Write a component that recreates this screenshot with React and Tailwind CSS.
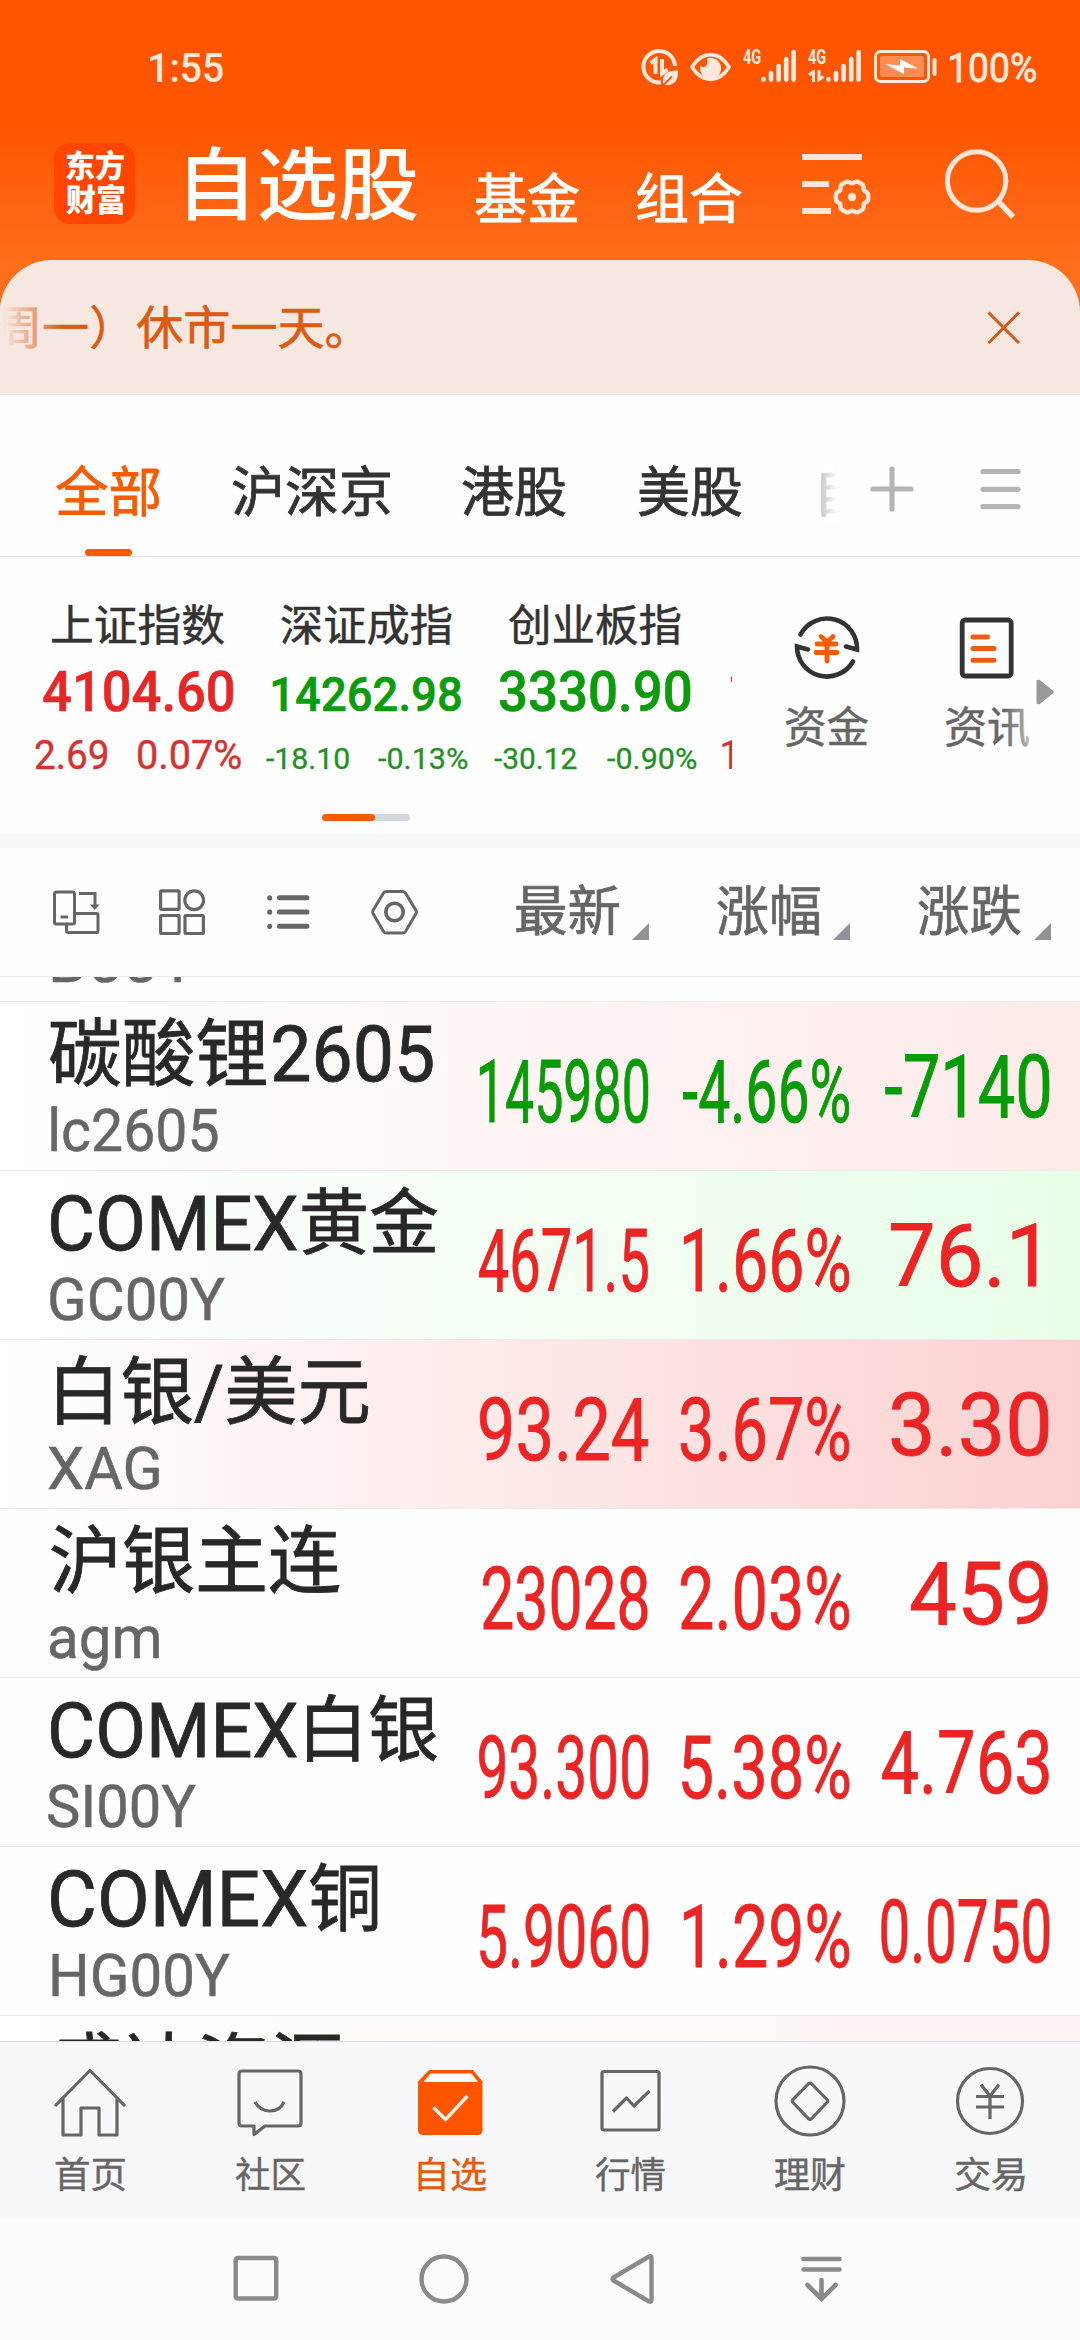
import React, { useLayoutEffect, useRef, useState } from "react";

// Single-line text whose glyphs are stretched horizontally to fill the width of its box.
function Fit({ className = "", children }) {
  const box = useRef(null);
  const [transform, setTransform] = useState("none");
  useLayoutEffect(() => {
    const el = box.current;
    const ctx = document.createElement("canvas").getContext("2d");
    const cs = getComputedStyle(el);
    ctx.font = `${cs.fontWeight} ${cs.fontSize} ${cs.fontFamily}`;
    const m = ctx.measureText(children);
    const ink = m.actualBoundingBoxLeft + m.actualBoundingBoxRight;
    const s = el.clientWidth / ink;
    setTransform(`translateX(${m.actualBoundingBoxLeft * s}px) scaleX(${s})`);
  }, [children]);
  return (
    <div ref={box} className={`shrink-0 whitespace-nowrap ${className}`}>
      <span className="inline-block origin-left" style={{ transform }}>
        {children}
      </span>
    </div>
  );
}

const gearPath =
  Array.from({ length: 72 }, (_, i) => {
    const a = (i * Math.PI) / 36;
    const r = 15.4 + 1.2 * Math.cos(6 * a) - 0.5 * Math.cos(12 * a);
    return `${i ? "L" : "M"}${(50 + r * Math.cos(a)).toFixed(2)} ${(43 + r * Math.sin(a)).toFixed(2)}`;
  }).join("") + "Z";

function StatusBar() {
  return (
    <div className="flex h-[120px] items-start pt-[48px] text-[#ffe9dd]">
      <Fit className="ml-[150px] w-[73px] text-[41px] leading-[40px] font-medium">1:55</Fit>
      <svg className="ml-[418px] h-[38px] w-[38px]" viewBox="0 0 38 38" fill="none" stroke="currentColor">
        <path d="M34 18A15.800 15.800 0 1 0 20 34.400" strokeWidth="4" />
        <path d="M9.500 15L14.500 11.500V26M21 11V25.500L26.500 21.500" strokeWidth="4" />
        <path d="M37 22.500C26 22 19.500 27 22.500 37C33 38 37.500 33 37 22.500Z" fill="currentColor" stroke="none" />
        <path d="M21.500 38L31 28.500" stroke="#ff5500" strokeWidth="1.800" />
      </svg>
      <svg className="ml-[11px] h-[38px] w-[41px]" viewBox="0 0 41 38" fill="none" stroke="currentColor">
        <path d="M2 19C12 2.500 29 2.500 39 19C29 35.500 12 35.500 2 19Z" strokeWidth="3.600" strokeLinejoin="round" />
        <path d="M17 10.500A10.500 10.500 0 1 1 10.500 17.500C13 21 19 19 17 10.500Z" fill="currentColor" stroke="none" />
      </svg>
      {[false, true].map((data) => (
        <div key={String(data)} className="ml-[12px] flex">
          <div className="w-[18px]">
            <Fit className="w-[18px] text-[21px] leading-[18px] font-bold">4G</Fit>
            {data && (
              <svg className="mt-[4px] h-[12px] w-[18px]" viewBox="0 0 18 12" fill="none" stroke="currentColor" strokeWidth="3">
                <path d="M1 5L5.500 1.500V12M11 0V9.500L15.500 6.500" />
              </svg>
            )}
          </div>
          <svg className="h-[36px] w-[35px]" viewBox="0 0 35 36" stroke="currentColor" strokeWidth="4.600" strokeLinecap="round">
            <path d="M2.500 31V31.600M10 25V31.600M17.600 18V31.600M25.200 11V31.600M32.600 4V31.600" />
          </svg>
        </div>
      ))}
      <svg className="ml-[13px] h-[38px] w-[64px]" viewBox="0 0 64 38" fill="none">
        <rect x="1.500" y="3.500" width="53" height="30" rx="5" stroke="#ffe9dd" strokeWidth="3" />
        <rect x="6" y="8" width="44" height="21" rx="2" fill="#ff8c55" />
        <path d="M11 16L26 17.500V11L44 20.500L30 19.500V26Z" fill="#fff" />
        <path d="M60.500 12V26" stroke="#ffe9dd" strokeWidth="4" strokeLinecap="round" />
      </svg>
      <Fit className="ml-[12px] w-[86px] text-[40px] leading-[41px] [-webkit-text-stroke:0.8px_currentColor]">100%</Fit>
    </div>
  );
}

function Header() {
  return (
    <div className="flex h-[140px] items-start text-white">
      <div className="mt-[23px] ml-[54px] flex h-[81px] w-[81px] flex-col items-center rounded-[16px] bg-[#ff4500] pt-[7px]">
        <Fit className="w-[58px] text-[31px] leading-[34px] font-black">东方</Fit>
        <Fit className="w-[58px] text-[31px] leading-[34px] font-black">财富</Fit>
      </div>
      <Fit className="mt-[27px] ml-[53px] w-[229px] text-[79px] leading-[80px] font-medium">自选股</Fit>
      <Fit className="mt-[51px] ml-[58px] w-[104px] text-[54px] leading-[60px] [-webkit-text-stroke:0.8px_currentColor]">基金</Fit>
      <Fit className="mt-[51px] ml-[58px] w-[105px] text-[54px] leading-[60px] [-webkit-text-stroke:0.8px_currentColor]">组合</Fit>
      <svg className="mt-[34px] ml-[60px] h-[66px] w-[70px]" viewBox="0 0 70 66" fill="none" stroke="#ffe6d8">
        <path d="M0 3H60M0 30H27M0 57H29" strokeWidth="6" />
        <path d={gearPath} strokeWidth="4.400" />
        <circle cx="50" cy="43" r="4.200" fill="#ffe6d8" stroke="none" />
      </svg>
      <svg className="mt-[28px] ml-[73px] h-[74px] w-[72px]" viewBox="0 0 72 74" fill="none" stroke="#ffe6d8" strokeWidth="5">
        <circle cx="31.600" cy="33" r="29.200" />
        <path d="M53 53L68 69" strokeWidth="5.500" />
      </svg>
    </div>
  );
}

function Notice() {
  return (
    <div className="relative flex h-[135px] items-center overflow-hidden rounded-t-[52px] bg-[#f6e7e0]">
      <div className="-ml-[4px] w-[347px]">
        <Fit className="w-[345px] text-[46px] leading-[60px] text-[#dc5a12] [-webkit-text-stroke:0.6px_currentColor]">周一）休市一天。</Fit>
      </div>
      <svg className="ml-[644px] h-[34px] w-[34px]" viewBox="0 0 34 34" stroke="#d25a1a" strokeWidth="3">
        <path d="M1.500 1.500L32 32M32 1.500L1.500 32" />
      </svg>
      <div className="absolute inset-y-0 left-0 w-[64px] bg-linear-to-r from-[#f6e7e0] from-5% to-transparent" />
    </div>
  );
}

function MarketTabs() {
  return (
    <div className="flex h-[162px] items-start border-b border-[#e2e2e4] pt-[69px] text-[54px] leading-[60px] text-[#333] [-webkit-text-stroke:0.8px_currentColor]">
      <div className="ml-[56px] flex w-[104px] flex-col items-center">
        <Fit className="w-[104px] text-[#fa5a00]">全部</Fit>
        <div className="mt-[25px] h-[7px] w-[47px] rounded-full bg-[#fa5a05]" />
      </div>
      <Fit className="ml-[73px] w-[157px]">沪深京</Fit>
      <Fit className="ml-[72px] w-[104px]">港股</Fit>
      <Fit className="ml-[73px] w-[103px]">美股</Fit>
      <div className="relative ml-[71px] w-[25px] overflow-hidden text-[#777]">
        <span className="block w-[120px] whitespace-nowrap">自选</span>
        <div className="absolute inset-0 bg-linear-to-r from-white/40 to-white" />
      </div>
      <svg className="mt-[2px] ml-[32px] h-[46px] w-[44px]" viewBox="0 0 44 46" stroke="#b4b4b4" strokeWidth="5.200" strokeLinecap="round">
        <path d="M3 23H41M22 3V43" />
      </svg>
      <svg className="mt-[4px] ml-[66px] h-[44px] w-[42px]" viewBox="0 0 42 44" stroke="#b4b4b4" strokeWidth="5.200" strokeLinecap="round">
        <path d="M3 3.500H38M3 21.300H38M3 38.700H38" />
      </svg>
    </div>
  );
}

const indexName = "text-[43px] leading-[50px] text-[#333] [-webkit-text-stroke:0.5px_currentColor]";
const indexSmall = "mt-[14px] flex w-full justify-between text-[29px] leading-[45px] text-[#219121] [-webkit-text-stroke:0.3px_currentColor]";

function IndexStrip() {
  return (
    <div className="flex h-[277px] flex-col">
      <div className="flex h-[257px] pt-[44px]">
        <div className="flex w-[732px] overflow-hidden">
          <div className="ml-[35px] flex w-[206px] shrink-0 flex-col items-center">
            <Fit className={`${indexName} w-[172px]`}>上证指数</Fit>
            <Fit className="mt-[10px] w-[190px] text-[56px] leading-[62px] font-medium text-[#e82626] [-webkit-text-stroke:0.6px_currentColor]">4104.60</Fit>
            <div className="mt-[11px] flex w-full justify-between text-[40px] leading-[44px] text-[#d63232] [-webkit-text-stroke:0.4px_currentColor]">
              <Fit className="w-[72px]">2.69</Fit>
              <Fit className="w-[103px]">0.07%</Fit>
            </div>
          </div>
          <div className="ml-[25px] flex w-[201px] shrink-0 flex-col items-center">
            <Fit className={`${indexName} w-[171px]`}>深证成指</Fit>
            <Fit className="mt-[15px] w-[188px] text-[49px] leading-[57px] font-medium text-[#0a9c0a] [-webkit-text-stroke:0.6px_currentColor]">14262.98</Fit>
            <div className={indexSmall}>
              <Fit className="w-[83px]">-18.10</Fit>
              <Fit className="w-[89px]">-0.13%</Fit>
            </div>
          </div>
          <div className="ml-[27px] flex w-[202px] shrink-0 flex-col items-center">
            <Fit className={`${indexName} w-[172px]`}>创业板指</Fit>
            <Fit className="mt-[10px] w-[190px] text-[56px] leading-[62px] font-medium text-[#0a9c0a] [-webkit-text-stroke:0.6px_currentColor]">3330.90</Fit>
            <div className={indexSmall}>
              <Fit className="w-[83px]">-30.12</Fit>
              <Fit className="w-[89px]">-0.90%</Fit>
            </div>
          </div>
          <div className="ml-[26px] w-[100px] shrink-0 pt-[60px] text-[#d63232]">
            <Fit className="ml-[8px] w-[93px] text-[56px] leading-[62px] font-medium">1.7</Fit>
            <Fit className="mt-[11px] w-[90px] text-[40px] leading-[44px]">13.58</Fit>
          </div>
        </div>
        <div className="ml-[52px] flex w-[86px] flex-col items-center text-[#666]">
          <svg className="mt-[13px] h-[68px] w-[68px]" viewBox="0 0 68 68" fill="none" strokeLinecap="round">
            <path d="M7.500 20.500A30 30 0 0 1 64 35.500L53 32.500M60 47.500A30 30 0 0 1 4 32.500L15 35.500" stroke="#333" strokeWidth="4.600" />
            <path d="M28 22.500L34 28L40 22.500M34 28V47M24 30H43M23 38.500H44" stroke="#fb5a06" strokeWidth="4.800" />
          </svg>
          <Fit className="mt-[21px] w-[82px] text-[43px] leading-[50px] [-webkit-text-stroke:0.5px_currentColor]">资金</Fit>
        </div>
        <div className="ml-[73px] flex w-[88px] flex-col items-center text-[#666]">
          <svg className="mt-[15px] h-[64px] w-[56px]" viewBox="0 0 56 64" fill="none" strokeLinecap="round">
            <rect x="3.200" y="4" width="49" height="56" rx="3" stroke="#333" strokeWidth="4.800" />
            <path d="M14 21H28.500M14 32.600H35M14 44.300H35" stroke="#ec5c16" strokeWidth="5" />
          </svg>
          <div className="relative mt-[23px]">
            <Fit className="w-[83px] text-[43px] leading-[50px] [-webkit-text-stroke:0.5px_currentColor]">资讯</Fit>
            <div className="absolute inset-y-0 right-0 w-[26px] bg-linear-to-r from-transparent to-white/50" />
          </div>
        </div>
        <svg className="mt-[77px] ml-[5px] h-[28px] w-[19px]" viewBox="0 0 19 28" fill="#999" stroke="#999" strokeWidth="4" strokeLinejoin="round">
          <path d="M2.500 3.500V24.500L15.500 14Z" />
        </svg>
      </div>
      <div className="ml-[322px] h-[7px] w-[88px] rounded-full bg-[#d4d7dc]">
        <div className="h-[7px] w-[53px] rounded-full bg-[#fa5a05]" />
      </div>
    </div>
  );
}

function SortLabel({ className, children }) {
  return (
    <div className={`flex ${className}`}>
      <Fit className="mt-[2px] w-[103px] text-[54px] leading-[60px] [-webkit-text-stroke:0.7px_currentColor]">{children}</Fit>
      <svg className="mt-[42px] ml-[13px] h-[17px] w-[17px]" viewBox="0 0 17 17" fill="#919197">
        <path d="M17 0V17H0Z" />
      </svg>
    </div>
  );
}

function Toolbar() {
  return (
    <div className="flex h-[129px] items-start border-b border-[#ececee] pt-[33px] text-[#666]">
      <svg className="mt-[8px] ml-[52px] h-[46px] w-[48px]" viewBox="0 0 48 46" fill="none" stroke="currentColor" strokeWidth="3">
        <rect x="2.500" y="3" width="20" height="32" rx="2" />
        <path d="M8.500 28H16M27 4.500H43V19M14.500 36V42Q14.500 43.500 16 43.500H44.500Q46 43.500 46 42V26Q46 24.500 44.500 24.500H23" />
        <path d="M38 15.500H47.500L42.800 21Z" fill="currentColor" stroke="none" />
      </svg>
      <svg className="mt-[8px] ml-[59px] h-[46px] w-[46px]" viewBox="0 0 46 46" fill="none" stroke="currentColor" strokeWidth="3.200">
        <rect x="1.600" y="1.800" width="18.500" height="18.500" rx="1" />
        <rect x="1.600" y="26.500" width="18.500" height="18" rx="1" />
        <rect x="26" y="26.500" width="18.400" height="18" rx="1" />
        <circle cx="35.200" cy="11.200" r="9.400" />
      </svg>
      <svg className="mt-[12px] ml-[62px] h-[38px] w-[43px]" viewBox="0 0 43 38" stroke="currentColor" strokeWidth="5" strokeLinecap="round">
        <path d="M2.700 4.700V4.900M2.700 19V19.200M2.700 33.300V33.500M12.500 4.700H40M12.500 19H40M12.500 33.300H40" />
      </svg>
      <svg className="mt-[8px] ml-[61px] h-[46px] w-[47px]" viewBox="0 0 47 46" fill="none" stroke="currentColor" strokeWidth="3">
        <path d="M12.500 4Q13.500 2.500 15.500 2.500H31.500Q33.500 2.500 34.500 4L45 21.500Q45.700 23 45 24.500L34.500 42.500Q33.500 44 31.500 44H15.500Q13.500 44 12.500 42.500L2 24.500Q1.300 23 2 21.500Z" />
        <circle cx="23.500" cy="23" r="8.700" strokeWidth="3.600" />
      </svg>
      <SortLabel className="ml-[98px]">最新</SortLabel>
      <SortLabel className="ml-[68px]">涨幅</SortLabel>
      <SortLabel className="ml-[68px]">涨跌</SortLabel>
    </div>
  );
}

const red = "text-[#ed2424]";
const green = "text-[#069c06]";
const comex = ["COMEX", "ml-[51px] w-[246px] text-[76px]"];

const quotes = [
  { id: "b", name: [], code: ["B00Y", "ml-[52px] w-[145px]"], tone: red, bg: "", values: [] },
  {
    id: "lc",
    name: [["碳酸锂", "ml-[50px] w-[216px] text-[74px]"], ["2605", "ml-[7px] w-[160px] text-[77px]"]],
    code: ["lc2605", "ml-[51px] w-[167px]"],
    tone: green,
    bg: "bg-linear-to-r from-white to-[#fdeae9]",
    values: [["145980", "w-[168px]"], ["-4.66%", "w-[166px]"], ["-7140", "w-[164px]"]],
  },
  {
    id: "gc",
    name: [comex, ["黄金", "ml-[5px] w-[135px] text-[72px]"]],
    code: ["GC00Y", "ml-[50px] w-[175px]"],
    tone: red,
    bg: "bg-linear-to-r from-white to-[#e8fde8]",
    values: [["4671.5", "w-[169px]"], ["1.66%", "w-[165px]"], ["76.1", "mr-[13px] w-[145px]"]],
  },
  {
    id: "xag",
    name: [["白银/美元", "ml-[57px] w-[311px] text-[74px]"]],
    code: ["XAG", "ml-[48px] w-[111px]"],
    tone: red,
    bg: "bg-linear-to-r from-white to-[#fbd1d0]",
    values: [["93.24", "w-[168px]"], ["3.67%", "w-[168px]"], ["3.30", "mr-[1px] w-[156px]"]],
  },
  {
    id: "ag",
    name: [["沪银主连", "ml-[51px] w-[289px] text-[74px]"]],
    code: ["agm", "ml-[50px] w-[109px]"],
    tone: red,
    bg: "",
    values: [["23028", "w-[165px]"], ["2.03%", "w-[168px]"], ["459", "mr-[1px] w-[137px]"]],
  },
  {
    id: "si",
    name: [comex, ["白银", "ml-[10px] w-[130px] text-[72px]"]],
    code: ["SI00Y", "ml-[48px] w-[148px]"],
    tone: red,
    bg: "",
    values: [["93.300", "w-[169px]"], ["5.38%", "w-[167px]"], ["4.763", "w-[167px]"]],
  },
  {
    id: "hg",
    name: [["COMEX", "ml-[51px] w-[256px] text-[77px]"], ["铜", "ml-[3px] w-[67px] text-[74px]"]],
    code: ["HG00Y", "ml-[52px] w-[178px]"],
    tone: red,
    bg: "",
    values: [["5.9060", "w-[168px]"], ["1.29%", "w-[165px]"], ["0.0750", "w-[168px]"]],
  },
  { id: "sd", name: [["盛达资源", "ml-[53px] w-[288px] text-[74px]"]], code: null, tone: red, bg: "bg-linear-to-r from-white to-[#fcf3f2]", values: [] },
];

const valueOffsets = ["w-[200px] pt-[46px]", "w-[201px] pt-[46px]", "w-[200px] pt-[41px]"];

function QuoteRow({ q }) {
  return (
    <div className={`flex h-[169px] shrink-0 border-b border-[#ececee] ${q.bg}`}>
      <div className="w-[448px] pt-[14px]">
        <div className="flex h-[78px] leading-[78px] text-[#282828] [-webkit-text-stroke:0.8px_currentColor]">
          {q.name.map(([text, cls]) => (
            <Fit key={text} className={cls}>{text}</Fit>
          ))}
        </div>
        {q.code && (
          <Fit className={`${q.code[1]} mt-[7px] text-[60px] leading-[60px] text-[#666] [-webkit-text-stroke:0.5px_currentColor]`}>{q.code[0]}</Fit>
        )}
      </div>
      <div className={`flex text-[87px] leading-[88px] [-webkit-text-stroke:0.8px_currentColor] ${q.tone}`}>
        {q.values.map(([text, cls], i) => (
          <div key={text} className={`flex justify-end ${valueOffsets[i]}`}>
            <Fit className={cls}>{text}</Fit>
          </div>
        ))}
      </div>
    </div>
  );
}

const tabs = [
  { label: "首页", icon: <path d="M2 41L37 5.500L72 41M10 34V70H28V43H46V70H64V34" /> },
  {
    label: "社区",
    icon: <path d="M9 6H65Q68 6 68 9V58Q68 61 65 61H32L21 69.500V61H9Q6 61 6 58V9Q6 6 9 6ZM22 37Q27 46 37 46Q47 46 51 37" />,
  },
  {
    label: "自选",
    active: true,
    icon: (
      <g stroke="none">
        <path d="M16 5H60L69.500 16.500V65Q69.500 70 64.500 70H10Q5 70 5 65V16.500Z" fill="#ff5500" />
        <path d="M17.500 8.500H58.500L65 17H10.500Z" fill="#fff" />
        <path d="M20.500 42.500L32.500 54.500L54.500 31" fill="none" stroke="#fff0e6" strokeWidth="3.400" />
      </g>
    ),
  },
  { label: "行情", icon: <path d="M11 6.500H64Q66 6.500 66 8.500V63Q66 65 64 65H11Q9 65 9 63V8.500Q9 6.500 11 6.500ZM20 46.500L33.500 33L41 41L56.500 26" /> },
  {
    label: "理财",
    icon: (
      <g>
        <circle cx="37" cy="36" r="34" />
        <path d="M35.300 19Q37 17.500 38.700 19L54 34.500Q55.500 36 54 37.500L38.700 53.500Q37 55 35.300 53.500L20 37.500Q18.500 36 20 34.500Z" />
      </g>
    ),
  },
  {
    label: "交易",
    icon: (
      <g>
        <circle cx="37" cy="36" r="32.500" />
        <path d="M28 19.500L37 31L46 19.500M37 31V54M23 31.500H51M23 42H51" strokeWidth="3.200" />
      </g>
    ),
  },
];

function TabBar() {
  return (
    <div className="flex h-[177px] border-t border-[#dedee0] bg-[#f8f8fa] pt-[23px]">
      {tabs.map((t) => (
        <div key={t.label} className={`flex w-[180px] flex-col items-center ${t.active ? "text-[#e2590f]" : "text-[#666]"}`}>
          <svg className="h-[74px] w-[74px]" viewBox="0 0 74 74" fill="none" stroke="currentColor" strokeWidth="3.200" strokeLinejoin="round">
            {t.icon}
          </svg>
          <Fit className={`mt-[16px] text-[36px] leading-[42px] [-webkit-text-stroke:0.4px_currentColor] ${t.active ? "ml-[4px] w-[68px]" : "w-[70px]"}`}>
            {t.label}
          </Fit>
        </div>
      ))}
    </div>
  );
}

function SystemNav() {
  return (
    <div className="flex h-[122px] items-start bg-[#fcfcfc] pt-[35px]">
      <svg className="ml-[231px] h-[54px] w-[50px]" viewBox="0 0 50 54" fill="none" stroke="#8a8a8a" strokeWidth="4.400">
        <rect x="4.700" y="5" width="40.500" height="40.500" rx="2" />
      </svg>
      <svg className="ml-[138px] h-[54px] w-[50px]" viewBox="0 0 50 54" fill="none" stroke="#8a8a8a" strokeWidth="4.400">
        <circle cx="25" cy="26" r="22.500" />
      </svg>
      <svg className="ml-[140px] h-[54px] w-[48px]" viewBox="0 0 48 54" fill="none" stroke="#8a8a8a" strokeWidth="4.400" strokeLinejoin="round">
        <path d="M40 3.500Q42.500 2.500 42.500 5V47Q42.500 49.500 40 48.500L4.500 27.500Q2.500 26 4.500 24.500Z" />
      </svg>
      <svg className="ml-[144px] h-[54px] w-[42px]" viewBox="0 0 42 54" fill="none" stroke="#8a8a8a" strokeWidth="4.600" strokeLinecap="round">
        <path d="M2.500 6H38.500M2.500 16.500H38.500M20.500 27V46M6.500 32L20.500 46L34.500 32" />
      </svg>
    </div>
  );
}

export default function App() {
  return (
    <div className="flex h-[2340px] w-[1080px] flex-col overflow-hidden bg-[#fefefe] font-[Roboto,'Noto_Sans_CJK_SC',sans-serif]">
      <div className="shrink-0 bg-linear-to-b from-[#ff5500] from-[125px] to-[#ff6e1a] to-[265px]">
        <StatusBar />
        <Header />
        <Notice />
      </div>
      <MarketTabs />
      <IndexStrip />
      <div className="h-[14px] shrink-0 bg-[#f7f8fa]" />
      <Toolbar />
      <div className="flex h-[1064px] shrink-0 flex-col overflow-hidden">
        <div className="-mt-[144px]">
          {quotes.map((q) => (
            <QuoteRow key={q.id} q={q} />
          ))}
        </div>
      </div>
      <TabBar />
      <SystemNav />
    </div>
  );
}
